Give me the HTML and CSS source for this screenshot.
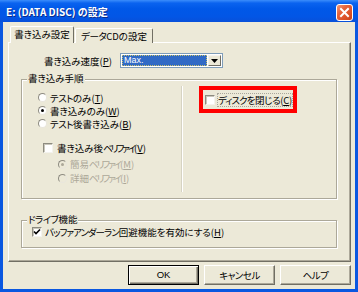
FILE: index.html
```html
<!DOCTYPE html>
<html lang="ja">
<head>
<meta charset="utf-8">
<link rel="stylesheet" href="styles.css">
</head>
<body>
<div class="window">
  <div class="titlebar">
    <span class="title">E: (DATA DISC) の設定</span>
    <span class="close">
      <svg width="11" height="11" viewBox="0 0 11 11"><path d="M2 2 L9 9 M9 2 L2 9" stroke="#fff" stroke-width="2" stroke-linecap="square"/></svg>
    </span>
  </div>
  <div class="client">
    <div class="tabs">
      <div class="tab active">書き込み設定</div>
      <div class="tab"><span class="kt1">データ</span>CDの設定</div>
    </div>
    <div class="panel">
      <div class="speed-row">
        <span class="speed-label">書き込み速度(<u>P</u>)</span>
        <div class="combo">
          <span class="combo-value">Max.</span>
          <span class="combo-btn"><svg width="7" height="4" viewBox="0 0 7 4"><path d="M0 0 H7 L3.5 4 Z" fill="#000"/></svg></span>
        </div>
      </div>

      <div class="group group-proc">
        <div class="legend">書き込み手順</div>
        <div class="proc">
          <div class="proc-left">
            <div class="row radio-row"><span class="radio"></span><span><span class="kt1">テスト</span>のみ(<u>T</u>)</span></div>
            <div class="row radio-row"><span class="radio on"></span><span>書き込みのみ(<u>W</u>)</span></div>
            <div class="row radio-row"><span class="radio"></span><span><span class="kt1">テスト</span>後書き込み(<u>B</u>)</span></div>
            <div class="row check-row"><span class="check"></span><span>書き込み後<span class="kt3">ベリファイ</span>(<u>V</u>)</span></div>
            <div class="row sub-row disabled"><span class="radio on dis"></span><span>簡易<span class="kt3">ベリファイ</span>(<u>M</u>)</span></div>
            <div class="row sub-row disabled"><span class="radio dis"></span><span>詳細<span class="kt3">ベリファイ</span>(<u>I</u>)</span></div>
          </div>
          <div class="sep"></div>
          <div class="proc-right">
            <div class="highlight">
              <span class="check"></span><span class="focus"><span class="kt2">ディスク</span>を閉じる(<u>C</u>)</span>
            </div>
          </div>
        </div>
      </div>

      <div class="group group-drive">
        <div class="legend"><span class="kt1">ドライブ</span>機能</div>
        <div class="row drive-row">
          <span class="check"><svg width="8" height="8" viewBox="0 0 8 8"><path d="M1 3.5 L3 5.5 L7 1.5" fill="none" stroke="#000" stroke-width="1.6"/></svg></span>
          <span><span class="kt2">バッファアンダーラン</span>回避機能を有効にする(<u>H</u>)</span>
        </div>
      </div>
    </div>
    <div class="buttons">
      <button class="btn default">OK</button>
      <button class="btn"><span class="kt1">キャンセル</span></button>
      <button class="btn"><span class="kt1">ヘルプ</span></button>
    </div>
  </div>
</div>
</body>
</html>
```

FILE: styles.css
```css
* { box-sizing: border-box; }
html, body { margin: 0; padding: 0; }
body {
  width: 358px;
  height: 292px;
  overflow: hidden;
  font-family: "Noto Sans CJK JP", "Liberation Sans", sans-serif;
  font-size: 9.5px;
  font-feature-settings: "palt" 1;
  color: #000;
  background: #0054e3;
}
u { text-decoration: underline; text-underline-offset: 1px; }
.kt1 { letter-spacing: -0.5px; }
.kt2 { letter-spacing: -1px; }
.kt3 { letter-spacing: -2.1px; }

.window {
  width: 358px;
  height: 292px;
  display: flex;
  flex-direction: column;
  background: #0a57e0;
}

.titlebar {
  height: 22px;
  flex: none;
  display: flex;
  align-items: center;
  padding: 0 5px 0 6px;
  background: linear-gradient(#3b8dfb 0%, #0a63ef 14%, #0058e8 40%, #0256e6 75%, #0850da 100%);
}
.title {
  flex: 1;
  color: #fff;
  font-weight: bold;
  font-size: 10px;
  text-shadow: 1px 1px 0 #0c2d8c;
}
.close {
  flex: none;
  width: 17px;
  height: 17px;
  margin-top: 2px;
  border: 1px solid #fff;
  border-radius: 3px;
  background-color: #e0582f;
  background-image: linear-gradient(135deg, #f29878 0%, #e6643c 35%, #dc5128 70%, #c94019 100%);
  display: flex;
  align-items: center;
  justify-content: center;
}

.client {
  flex: 1;
  margin: 0 3px 3px;
  background: #ece9d8;
  display: flex;
  flex-direction: column;
  padding: 4px 4px 4px 5px;
}

.tabs {
  display: flex;
  align-items: flex-end;
  height: 17px;
  margin: 0 0 -1px 2px;
  position: relative;
  z-index: 1;
}
.tab {
  height: 15px;
  width: 78px;
  margin-left: 1px;
  border: 1px solid;
  border-color: #fff #716f64 transparent #fff;
  border-bottom: none;
  border-radius: 2px 2px 0 0;
  background: #ece9d8;
  display: flex;
  align-items: center;
  justify-content: center;
  line-height: 12px;
  padding-bottom: 1px;
}
.tab.active {
  height: 17px;
  width: 64px;
  margin-left: 0;
  padding-bottom: 2px;
}

.panel {
  height: 220px;
  flex: none;
  border: 1px solid;
  border-color: #fff #716f64 #716f64 #fff;
  box-shadow: inset -1px -1px 0 #aca899;
  padding: 10px 13px 0 12px;
  display: flex;
  flex-direction: column;
}

.speed-row {
  height: 15px;
  display: flex;
  align-items: center;
}
.speed-label {
  width: 91px;
  text-align: right;
  line-height: 12px;
}
.combo {
  margin-left: 8px;
  width: 103px;
  height: 15px;
  border: 1px solid #7f9db9;
  background: #fff;
  padding: 1px;
  display: flex;
}
.combo-value {
  flex: 1;
  background: #316ac5;
  color: #fff;
  font-family: "Liberation Sans", sans-serif;
  font-size: 9px;
  line-height: 11px;
  padding-left: 2px;
  outline: 1px dotted #c9c26b;
  outline-offset: -1px;
}
.combo-btn {
  width: 13px;
  margin-left: 1px;
  border: 1px solid;
  border-color: #f4f3ee #716f64 #716f64 #f4f3ee;
  background: #ece9d8;
  display: flex;
  align-items: center;
  justify-content: center;
}

.group {
  border: 1px solid #aca899;
  box-shadow: inset 1px 1px 0 #fff, 1px 1px 0 #fff;
  flex: none;
}
.group-proc {
  margin-top: 11px;
  height: 120px;
}
.group-drive {
  margin-top: 21px;
  height: 28px;
}
.legend {
  width: fit-content;
  height: 12px;
  line-height: 12px;
  margin: -8px 0 0 5px;
  padding: 0 1px;
  background: #ece9d8;
}

.proc {
  display: flex;
  height: 112px;
  margin-top: 1px;
}
.proc-left {
  width: 160px;
  padding: 6px 0 0 16px;
  display: flex;
  flex-direction: column;
}
.row {
  display: flex;
  align-items: center;
  line-height: 12px;
  white-space: nowrap;
}
.radio-row { height: 13px; gap: 3px; }
.check-row { height: 13px; margin-top: 11px; padding-left: 5px; gap: 4px; }
.sub-row { height: 14px; padding-left: 20px; gap: 3px; }
.check-row + .sub-row { margin-top: 3px; }
.disabled { color: #aca899; }

.radio {
  width: 9px;
  height: 9px;
  border-radius: 50%;
  background: #fff;
  border: 1px solid;
  border-color: #8d8b80 #e8e6dc #e8e6dc #8d8b80;
  position: relative;
  flex: none;
}
.radio.on::after {
  content: "";
  position: absolute;
  left: 2px;
  top: 2px;
  width: 3px;
  height: 3px;
  border-radius: 50%;
  background: #000;
}
.radio.dis { background: #ece9d8; }
.radio.dis.on::after { background: #aca899; }

.check {
  width: 10px;
  height: 10px;
  background: #fff;
  border: 1px solid;
  border-color: #8d8b80 #f4f3ee #f4f3ee #8d8b80;
  box-shadow: inset 1px 1px 0 #c9c7bb;
  flex: none;
  display: flex;
  align-items: center;
  justify-content: center;
}

.sep {
  width: 1px;
  margin: 1px 0 5px;
  background: #fff;
  box-shadow: -1px 0 0 #d6d3c3;
}
.proc-right {
  padding: 1px 0 0 16px;
}
.highlight {
  width: 98px;
  height: 27px;
  border: 4px solid #ff0000;
  display: flex;
  align-items: center;
  padding-left: 2px;
  gap: 2px;
  white-space: nowrap;
  overflow: hidden;
}
.focus {
  border: 1px dotted #a8a69a;
  line-height: 12px;
  padding: 0;
  letter-spacing: -0.35px;
}

.drive-row {
  height: 12px;
  padding-left: 10px;
  gap: 3px;
  margin-top: 1px;
}

.buttons {
  display: flex;
  justify-content: flex-end;
  gap: 5px;
  margin-top: 3px;
  height: 20px;
}
.btn {
  width: 71px;
  height: 20px;
  font-family: inherit;
  font-size: 9.5px;
  font-feature-settings: "palt" 1;
  color: #000;
  background: #ece9d8;
  border: 1px solid;
  border-color: #fff #716f64 #716f64 #fff;
  box-shadow: inset -1px -1px 0 #aca899;
  padding: 0;
  line-height: 12px;
}
.btn.default {
  border: 1px solid #000;
  box-shadow: inset 1px 1px 0 #fff, inset -1px -1px 0 #716f64, inset -2px -2px 0 #aca899;
  font-family: "Liberation Sans", sans-serif;
}
```
